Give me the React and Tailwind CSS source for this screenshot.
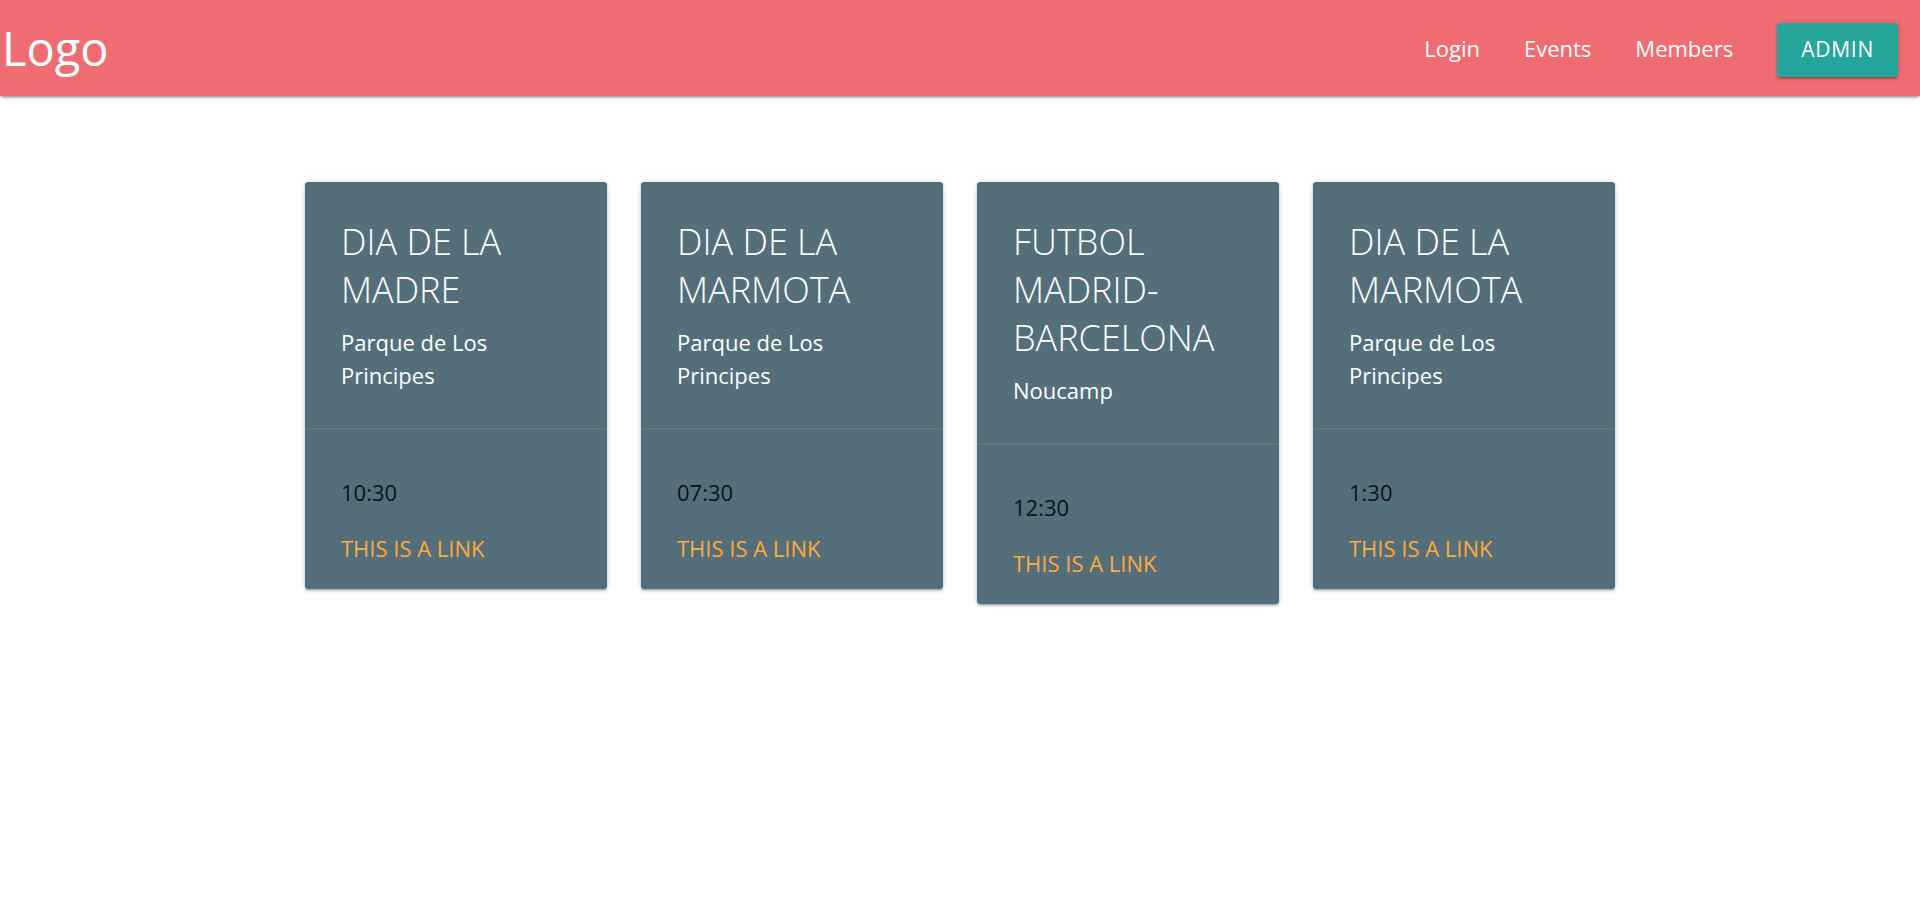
import React from 'react';

const events = [
  { id: 1, title: 'Dia de la Madre', place: 'Parque de Los Principes', time: '10:30' },
  { id: 2, title: 'Dia de la Marmota', place: 'Parque de Los Principes', time: '07:30' },
  { id: 3, title: 'Futbol Madrid-Barcelona', place: 'Noucamp', time: '12:30' },
  { id: 4, title: 'Dia de la Marmota', place: 'Parque de Los Principes', time: '1:30' },
];

const shadow = 'shadow-[0_2px_2px_0_rgba(0,0,0,0.14),0_3px_1px_-2px_rgba(0,0,0,0.12),0_1px_5px_0_rgba(0,0,0,0.2)]';

const EventCard = ({ event }) => (
  <div className={`w-[302px] bg-[#546e7a] rounded-[3px] ${shadow}`}>
    <div className="p-[36px] text-white">
      <h2 className="text-[36px] leading-[48px] font-light uppercase mb-[12px]">{event.title}</h2>
      <p className="text-[22px] leading-[33px]">{event.place}</p>
    </div>
    <div className="border-t-2 border-[rgba(160,160,160,0.2)] px-[36px] pt-[23px] pb-[24px]">
      <p className="mt-[23px] text-[22px] leading-[33px] text-black/85">{event.time}</p>
      <a href="#" className="block mt-[23px] text-[22px] leading-[33px] uppercase text-[#ffab40]">
        This is a link
      </a>
    </div>
  </div>
);

const App = () => {
  return (
    <div className="min-h-screen bg-white font-['Open_Sans',sans-serif]">
      {/* Navbar */}
      <nav className={`h-[96px] bg-[#ef6d72] text-white flex items-center justify-between ${shadow}`}>
        <a href="#" className="pl-[2px] text-[47px] leading-[96px]">Logo</a>
        <ul className="flex items-center">
          <li><a href="#" className="block px-[22px] text-[22px] leading-[96px]">Login</a></li>
          <li><a href="#" className="block px-[22px] text-[22px] leading-[96px]">Events</a></li>
          <li><a href="#" className="block px-[22px] text-[22px] leading-[96px]">Members</a></li>
          <li className="pl-[22px] pr-[22px] mt-[4px]">
            <button className={`h-[54px] px-[24px] bg-[#26a69a] rounded-[3px] text-[21px] tracking-[0.75px] uppercase text-white ${shadow}`}>
              Admin
            </button>
          </li>
        </ul>
      </nav>

      {/* Event cards */}
      <div className="flex justify-center items-start gap-[34px] pt-[86px]">
        {events.map(ev => <EventCard key={ev.id} event={ev} />)}
      </div>
    </div>
  );
};

export default App;
